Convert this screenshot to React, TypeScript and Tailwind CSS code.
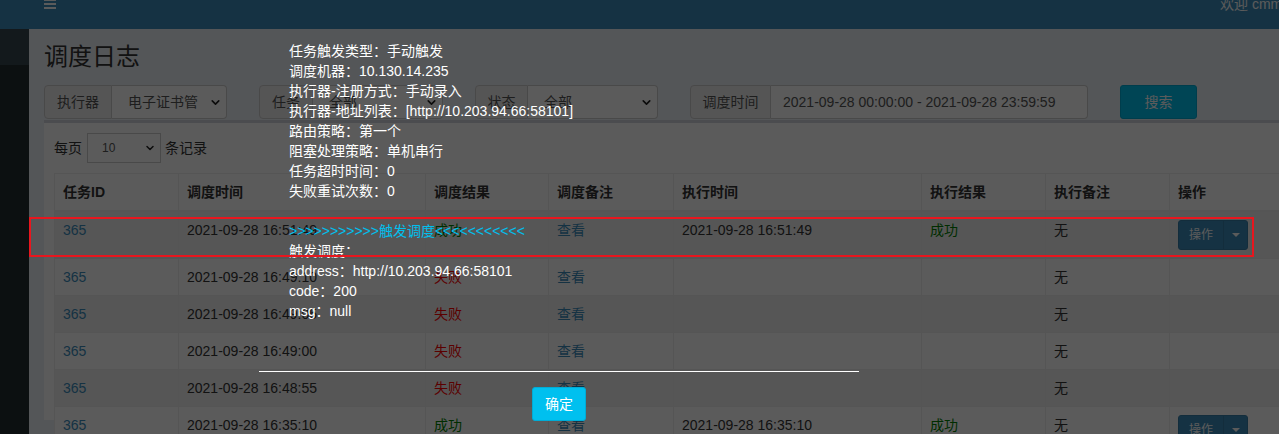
import { ChevronDown } from 'lucide-react';

const rows = [
  { id: '365', time: '2021-09-28 16:51:49', ok: true, exec: '2021-09-28 16:51:49' },
  { id: '365', time: '2021-09-28 16:49:10', ok: false, exec: '' },
  { id: '365', time: '2021-09-28 16:49:05', ok: false, exec: '' },
  { id: '365', time: '2021-09-28 16:49:00', ok: false, exec: '' },
  { id: '365', time: '2021-09-28 16:48:55', ok: false, exec: '' },
  { id: '365', time: '2021-09-28 16:35:10', ok: true, exec: '2021-09-28 16:35:10' },
];

const cols = [124, 247, 123, 125, 248, 124, 124, 110];
const heads = ['任务ID', '调度时间', '调度结果', '调度备注', '执行时间', '执行结果', '执行备注', '操作'];

const triggerMsg = [
  '任务触发类型：手动触发',
  '调度机器：10.130.14.235',
  '执行器-注册方式：手动录入',
  '执行器-地址列表：[http://10.203.94.66:58101]',
  '路由策略：第一个',
  '阻塞处理策略：单机串行',
  '任务超时时间：0',
  '失败重试次数：0',
];

function FilterGroup({ label, value, addonW, w }: { label: string; value: string; addonW: string; w: string }) {
  return (
    <div className={`flex h-[34px] shrink-0 ${w}`}>
      <div className={`flex items-center justify-center ${addonW} border border-[#ccc] bg-[#eee] rounded-l-[4px] text-[#555]`}>
        {label}
      </div>
      <div className="flex flex-1 items-center justify-between border border-l-0 border-[#ccc] bg-white rounded-r-[4px] pl-[16px] pr-[4px] text-[#555]">
        <span>{value}</span>
        <ChevronDown className="w-[13px] h-[13px] text-[#222]" strokeWidth={3} />
      </div>
    </div>
  );
}

function OpButton() {
  return (
    <div className="inline-flex h-[30px] rounded-[3px] bg-[#3c8dbc] border border-[#367fa9] text-white text-[12px]">
      <span className="flex items-center px-[10px]">操作</span>
      <span className="flex items-center justify-center w-[24px] border-l border-[#367fa9]">
        <span className="w-0 h-0 border-x-[4px] border-x-transparent border-t-[4px] border-t-white" />
      </span>
    </div>
  );
}

export default function App() {
  return (
    <div className="relative w-[1279px] h-[434px] overflow-hidden bg-[#ecf0f5] text-[14px] text-[#333] font-['Liberation_Sans','Noto_Sans_CJK_SC',sans-serif]">
      {/* 顶部栏 */}
      <header className="h-[29px] overflow-hidden bg-[#3c8dbc]">
        <div className="flex items-center h-[50px] -mt-[21px] pl-[44px]">
          <div className="flex flex-col gap-[2.5px] w-[12px]">
            <span className="h-[1.5px] bg-white" />
            <span className="h-[1.5px] bg-white" />
            <span className="h-[1.5px] bg-white" />
          </div>
          <div className="flex-1" />
          <div className="w-[59px] shrink-0 whitespace-nowrap text-white">欢迎 cmmtest</div>
        </div>
      </header>

      <div className="flex h-[405px]">
        {/* 侧边栏 */}
        <aside className="w-[29px] shrink-0 bg-[#222d32]">
          <div className="h-[36px] bg-[#374850]" />
        </aside>

        {/* 内容 */}
        <main className="flex-1 overflow-hidden pt-[15px] pl-[15px]">
          <h1 className="text-[24px] leading-[26px] text-[#333]">调度日志</h1>

          <div className="flex gap-[32px] mt-[15px]">
            <FilterGroup label="执行器" value="电子证书管" addonW="w-[68px]" w="w-[183px]" />
            <FilterGroup label="任务" value="全部" addonW="w-[54px]" w="w-[184px]" />
            <FilterGroup label="状态" value="全部" addonW="w-[53px]" w="w-[183px]" />
            <div className="flex h-[34px] w-[398px] shrink-0">
              <div className="flex items-center justify-center w-[81px] border border-[#ccc] bg-[#eee] rounded-l-[4px] text-[#555]">
                调度时间
              </div>
              <div className="flex flex-1 items-center border border-l-0 border-[#ccc] bg-white rounded-r-[4px] px-[12px] text-[#555]">
                2021-09-28 00:00:00 - 2021-09-28 23:59:59
              </div>
            </div>
            <button className="h-[34px] w-[77px] shrink-0 rounded-[3px] bg-[#00c0ef] border border-[#00acd6] text-white">
              搜索
            </button>
          </div>

          {/* 表格 */}
          <div className="mt-[1px] w-[1250px] bg-white border-t-[3px] border-[#d2d6de] p-[10px] h-[300px]">
            <div className="flex items-center h-[30px]">
              <span>每页</span>
              <div className="flex items-center justify-between w-[74px] h-[30px] ml-[5px] border border-[#ccc] pl-[14px] pr-[4px] text-[12px] text-[#555]">
                <span>10</span>
                <ChevronDown className="w-[12px] h-[12px] text-[#222]" strokeWidth={3} />
              </div>
              <span className="ml-[4px]">条记录</span>
            </div>

            <table className="mt-[10px] table-fixed border-collapse border border-[#eee]">
              <colgroup>
                {cols.map((w, i) => (
                  <col key={i} style={{ width: w }} />
                ))}
              </colgroup>
              <thead>
                <tr>
                  {heads.map((h) => (
                    <th key={h} className="px-[8px] py-[8px] leading-[20px] text-left font-bold border border-[#eee] border-b-2">
                      {h}
                    </th>
                  ))}
                </tr>
              </thead>
              <tbody>
                {rows.map((r, i) => (
                  <tr key={i} className={i % 2 === 0 ? 'bg-[#f0f0f0]' : 'bg-white'}>
                    <td className="p-[8px] leading-[20px] align-top border border-[#eee] text-[#3c8dbc]">{r.id}</td>
                    <td className="p-[8px] leading-[20px] align-top border border-[#eee]">{r.time}</td>
                    <td className={`p-[8px] leading-[20px] align-top border border-[#eee] ${r.ok ? 'text-[#008000]' : 'text-[#ff0000]'}`}>
                      {r.ok ? '成功' : '失败'}
                    </td>
                    <td className="p-[8px] leading-[20px] align-top border border-[#eee] text-[#3c8dbc]">查看</td>
                    <td className="p-[8px] leading-[20px] align-top border border-[#eee]">{r.exec}</td>
                    <td className="p-[8px] leading-[20px] align-top border border-[#eee] text-[#008000]">{r.ok ? '成功' : ''}</td>
                    <td className="p-[8px] leading-[20px] align-top border border-[#eee]">无</td>
                    <td className="p-[8px] leading-[20px] align-top border border-[#eee]">{r.ok && <OpButton />}</td>
                  </tr>
                ))}
              </tbody>
            </table>
          </div>
        </main>
      </div>

      {/* 遮罩 */}
      <div className="absolute inset-0 bg-black/[0.645]" />

      {/* 弹窗 */}
      <div className="absolute left-[259px] top-[26px] w-[600px] text-white text-[14px] leading-[20px]">
        <div className="pt-[15px] pb-[50px] px-[30px]">
          {triggerMsg.map((l) => (
            <div key={l}>{l}</div>
          ))}
          <div className="h-[20px]" />
          <div className="text-[#00c0ef]">&gt;&gt;&gt;&gt;&gt;&gt;&gt;&gt;&gt;&gt;&gt;触发调度&lt;&lt;&lt;&lt;&lt;&lt;&lt;&lt;&lt;&lt;&lt;</div>
          <div>触发调度：</div>
          <div>address：http://10.203.94.66:58101</div>
          <div>code：200</div>
          <div>msg：null</div>
        </div>
        <div className="flex justify-center border-t border-white pt-[15px]">
          <button className="h-[34px] px-[12px] rounded-[3px] bg-[#00c0ef] border border-[#00acd6] text-white">确定</button>
        </div>
      </div>

      {/* 标注框 */}
      <div className="absolute left-[29px] top-[217px] w-[1225px] h-[40px] border-2 border-[#e8161e]" />
    </div>
  );
}
